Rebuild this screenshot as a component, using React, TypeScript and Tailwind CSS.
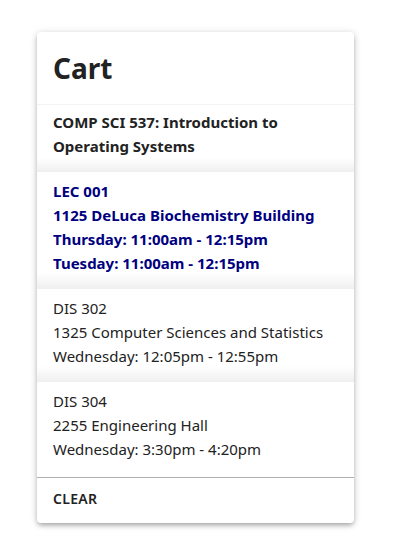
const sections = [
  {
    id: "LEC 001",
    place: "1125 DeLuca Biochemistry Building",
    times: ["Thursday: 11:00am - 12:15pm", "Tuesday: 11:00am - 12:15pm"],
    selected: true,
  },
  {
    id: "DIS 302",
    place: "1325 Computer Sciences and Statistics",
    times: ["Wednesday: 12:05pm - 12:55pm"],
    selected: false,
  },
  {
    id: "DIS 304",
    place: "2255 Engineering Hall",
    times: ["Wednesday: 3:30pm - 4:20pm"],
    selected: false,
  },
];

export default function App() {
  return (
    <div
      className="min-h-[559px] bg-white pl-[37px] pt-[32px]"
      style={{ fontFamily: '"Noto Sans", "Open Sans", sans-serif' }}
    >
      <div className="w-[317px] overflow-hidden rounded-[4px] bg-white shadow-[0_3px_4px_-1px_rgba(0,0,0,0.2),0_2px_6px_0_rgba(0,0,0,0.14),0_1px_10px_0_rgba(0,0,0,0.1)]">
        {/* Header */}
        <div className="h-[72px] px-4 pt-[17px]">
          <h2 className="text-[28px] font-bold leading-[38px] text-[#222]">Cart</h2>
        </div>

        {/* Course */}
        <div className="border-t border-[#f3f3f3] bg-[linear-gradient(to_bottom,#fff_calc(100%-14px),#efefef)] px-4 pb-[14px] pt-[5px]">
          <div className="text-[15px] font-bold leading-6 text-[#222]">
            COMP SCI 537: Introduction to Operating Systems
          </div>
        </div>

        {/* Sections */}
        {sections.map((s, i) => {
          const last = i === sections.length - 1;
          return (
            <div
              key={s.id}
              className={`px-4 pt-[7px] ${
                last
                  ? "bg-white pb-[16px]"
                  : "bg-[linear-gradient(to_bottom,#fff_calc(100%-16px),#efefef)] pb-[14px]"
              } ${s.selected ? "font-bold text-[#000080]" : "text-[#222]"}`}
            >
              <div className="text-[15px] leading-6">{s.id}</div>
              <div className="text-[15px] leading-6">{s.place}</div>
              {s.times.map((t) => (
                <div key={t} className="text-[15px] leading-6">
                  {t}
                </div>
              ))}
            </div>
          );
        })}

        {/* Actions */}
        <div className="border-t border-[#b0b0b0] px-4 pb-[13px] pt-[8px]">
          <button className="text-[14px] font-semibold uppercase leading-5 tracking-[0.02em] text-[#222]">
            Clear
          </button>
        </div>
      </div>
    </div>
  );
}
